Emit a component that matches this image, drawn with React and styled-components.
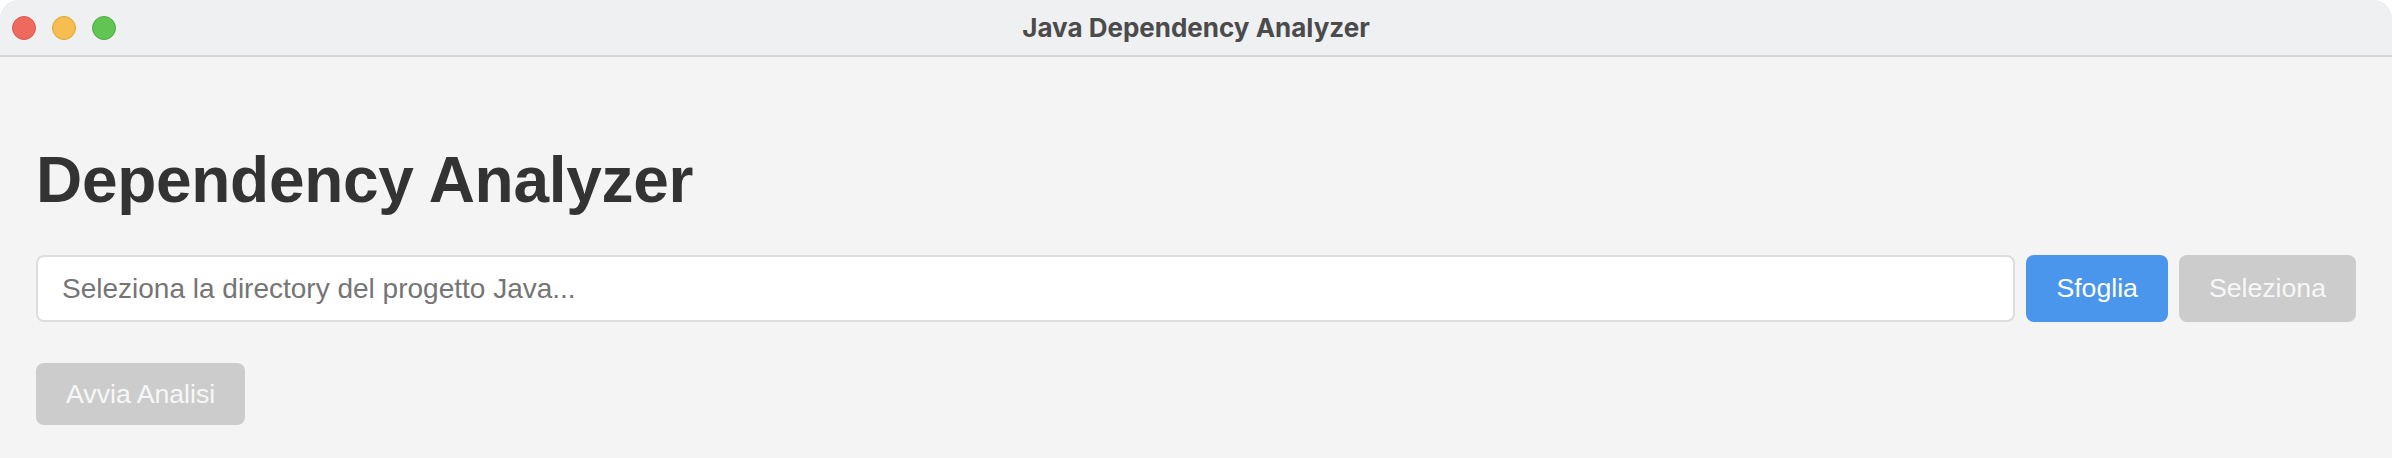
import styled, { createGlobalStyle } from "styled-components";

const GlobalStyle = createGlobalStyle`
  html, body {
    margin: 0;
    padding: 0;
    background: #ffffff;
  }
  * {
    box-sizing: border-box;
  }
`;

const lights = [
  { bg: "#ee6a5f", edge: "#d55a50" },
  { bg: "#f6be50", edge: "#dba23c" },
  { bg: "#61c554", edge: "#4fab43" },
];

const App = () => {
  return (
    <>
      <GlobalStyle />
      <Window>
        <TitleBar>
          <Lights>
            {lights.map((l, i) => (
              <Light key={i} $bg={l.bg} $edge={l.edge} />
            ))}
          </Lights>
          <WindowTitle>Java Dependency Analyzer</WindowTitle>
          <span />
        </TitleBar>
        <Content>
          <Heading>Dependency Analyzer</Heading>
          <PathRow>
            <PathInput
              type="text"
              placeholder="Seleziona la directory del progetto Java..."
              readOnly
            />
            <Button $primary>Sfoglia</Button>
            <Button disabled>Seleziona</Button>
          </PathRow>
          <Actions>
            <Button disabled>Avvia Analisi</Button>
          </Actions>
        </Content>
      </Window>
    </>
  );
};

export default App;

const Window = styled.div`
  display: flex;
  flex-direction: column;
  min-height: 100vh;
  background-color: #f4f4f4;
  border-radius: 20px 20px 0 0;
  overflow: hidden;
  box-shadow: inset 0 1px 0 #d8d8d8;
`;

const TitleBar = styled.div`
  display: grid;
  grid-template-columns: 1fr auto 1fr;
  align-items: center;
  height: 57px;
  background-color: #eff0f2;
  border-bottom: 2px solid #d6d6d6;
`;

const Lights = styled.div`
  display: flex;
  align-items: center;
  gap: 16px;
  padding-left: 12px;
`;

const Light = styled.span`
  width: 24px;
  height: 24px;
  border-radius: 50%;
  background-color: ${(p) => p.$bg};
  border: 1px solid ${(p) => p.$edge};
`;

const WindowTitle = styled.div`
  font-family: Inter, Roboto, "Liberation Sans", sans-serif;
  font-weight: 700;
  font-size: 26px;
  color: #4b4b4b;
`;

const Content = styled.div`
  display: flex;
  flex-direction: column;
  padding: 86px 36px 0;
  font-family: "Liberation Sans", Arial, sans-serif;
`;

const Heading = styled.h1`
  margin: 0;
  font-size: 64px;
  font-weight: 700;
  letter-spacing: -0.3px;
  color: #333333;
`;

const PathRow = styled.div`
  display: flex;
  gap: 11px;
  height: 67px;
  margin-top: 38px;
`;

const PathInput = styled.input`
  flex: 1;
  min-width: 0;
  padding: 0 24px;
  border: 2px solid #dddddd;
  border-radius: 8px;
  background-color: #ffffff;
  font-family: "Liberation Sans", Arial, sans-serif;
  font-size: 28px;
  color: #333;
  outline: none;

  &::placeholder {
    color: #757575;
  }
`;

const Button = styled.button`
  padding: 0 30px;
  border: none;
  border-radius: 8px;
  font-family: "Liberation Sans", Arial, sans-serif;
  font-size: 26.67px;
  color: #ffffff;
  background-color: ${(p) => (p.$primary ? "#4a96ec" : "#cccccc")};
  cursor: pointer;

  &:disabled {
    cursor: default;
    color: #f7f7f7;
  }
`;

const Actions = styled.div`
  display: flex;
  height: 62px;
  margin-top: 41px;
`;
